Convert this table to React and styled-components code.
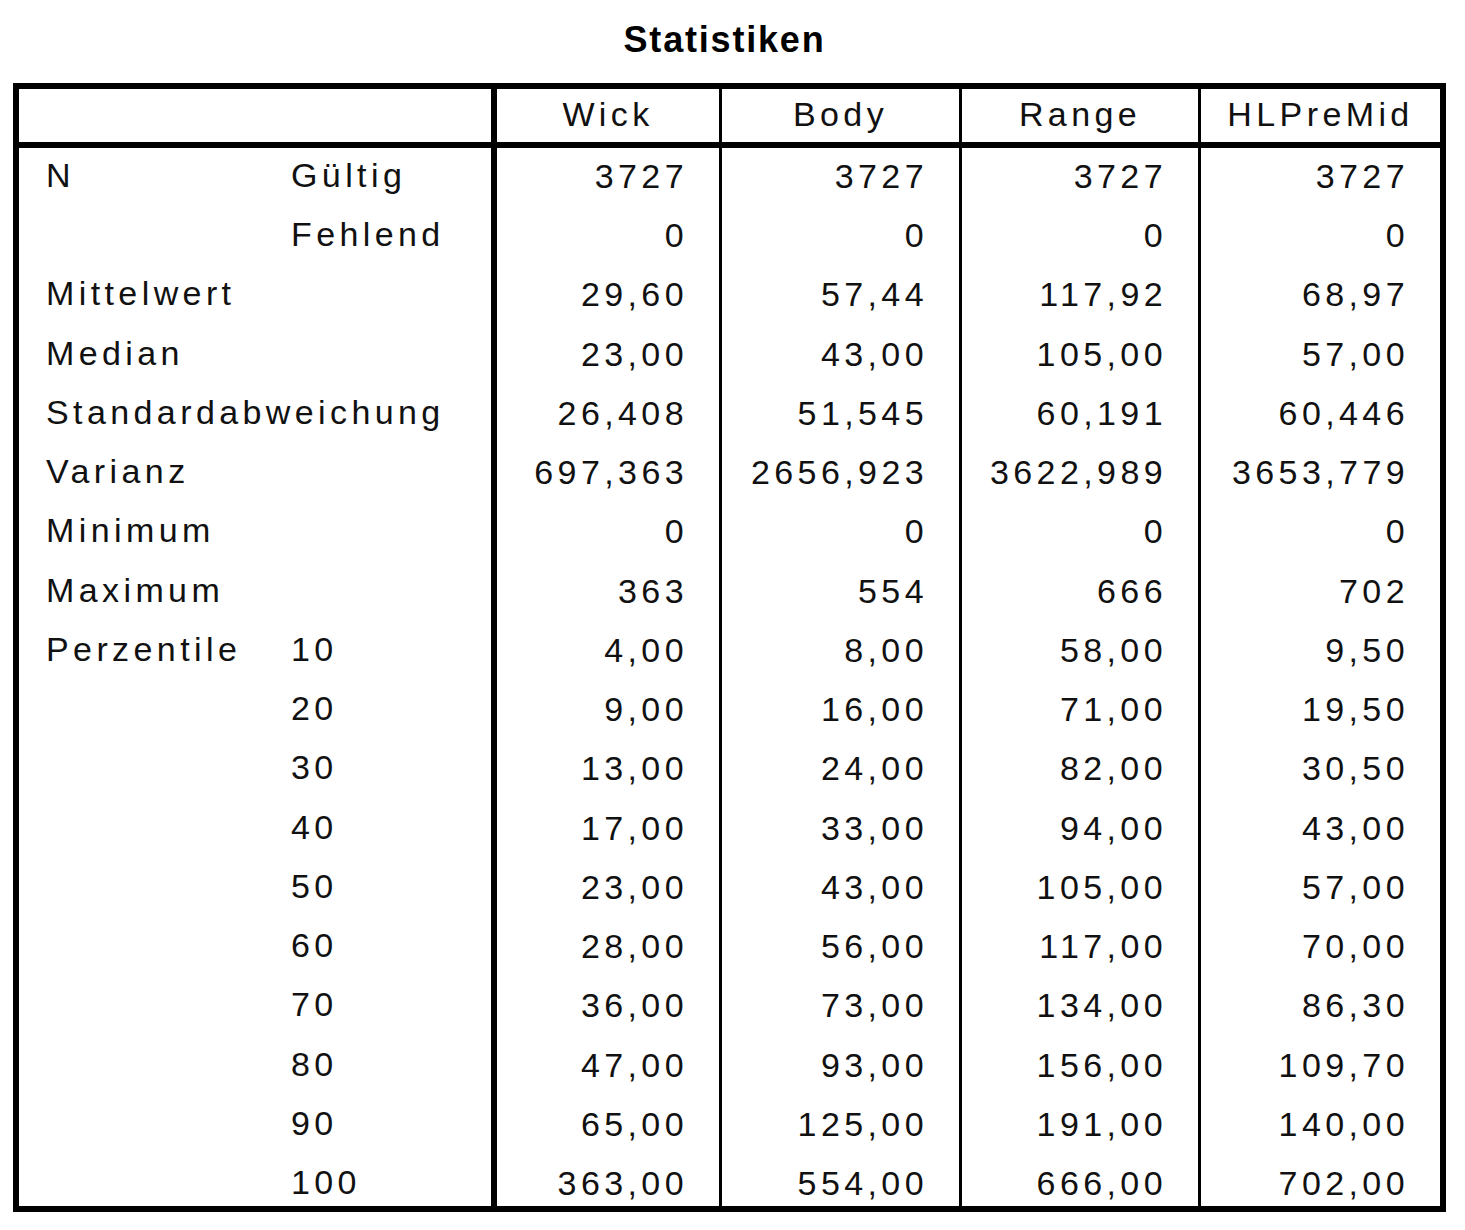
import React from 'react'
import styled, { createGlobalStyle } from 'styled-components'

const GlobalStyle = createGlobalStyle`
  html, body {
    margin: 0;
    padding: 0;
    background: #ffffff;
  }
  body {
    font-family: "Liberation Sans", Arial, sans-serif;
    color: #111;
  }
`

const Page = styled.div`
  padding: 0 0 0 13px;
  width: 1433px;
`

const Title = styled.h1`
  margin: 0;
  height: 83px;
  display: flex;
  align-items: center;
  justify-content: center;
  padding-right: 10px;
  padding-bottom: 4px;
  box-sizing: border-box;
  font-size: 36px;
  font-weight: bold;
  letter-spacing: 1.8px;
  color: #000;
`

const Grid = styled.div`
  display: grid;
  grid-template-columns: 245px 227px 228px 240px 239px 242px;
  grid-template-rows: 59px repeat(18, 58.8px);
  border: 6px solid #000;
  width: 1433px;
  box-sizing: border-box;
`

// $nudge pushes the text of lower rows down a little, like the SPSS output does
const Cell = styled.div`
  box-sizing: border-box;
  display: flex;
  align-items: center;
  justify-content: ${p => (p.$align === 'right' ? 'flex-end' : p.$align === 'center' ? 'center' : 'flex-start')};
  padding-top: ${p => p.$nudge || 0}px;
  padding-right: ${p => (p.$align === 'right' ? '31px' : '0')};
  padding-bottom: ${p => (p.$align === 'right' || p.$align === 'center' ? '2px' : '4px')};
  padding-left: ${p => (p.$align ? '0' : '27px')};
  border-left: ${p => (p.$line === 'thick' ? '6px solid #000' : p.$line === 'thin' ? '3px solid #000' : 'none')};
  border-bottom: ${p => (p.$head ? '6px solid #000' : 'none')};
  grid-column: ${p => p.$span || 'auto'};
  font-size: 34px;
  letter-spacing: 4.4px;
  white-space: nowrap;
`

const columns = ['Wick', 'Body', 'Range', 'HLPreMid']

const rows = [
  ['N', 'Gültig', '3727', '3727', '3727', '3727'],
  ['', 'Fehlend', '0', '0', '0', '0'],
  ['Mittelwert', '', '29,60', '57,44', '117,92', '68,97'],
  ['Median', '', '23,00', '43,00', '105,00', '57,00'],
  ['Standardabweichung', '', '26,408', '51,545', '60,191', '60,446'],
  ['Varianz', '', '697,363', '2656,923', '3622,989', '3653,779'],
  ['Minimum', '', '0', '0', '0', '0'],
  ['Maximum', '', '363', '554', '666', '702'],
  ['Perzentile', '10', '4,00', '8,00', '58,00', '9,50'],
  ['', '20', '9,00', '16,00', '71,00', '19,50'],
  ['', '30', '13,00', '24,00', '82,00', '30,50'],
  ['', '40', '17,00', '33,00', '94,00', '43,00'],
  ['', '50', '23,00', '43,00', '105,00', '57,00'],
  ['', '60', '28,00', '56,00', '117,00', '70,00'],
  ['', '70', '36,00', '73,00', '134,00', '86,30'],
  ['', '80', '47,00', '93,00', '156,00', '109,70'],
  ['', '90', '65,00', '125,00', '191,00', '140,00'],
  ['', '100', '363,00', '554,00', '666,00', '702,00'],
]

const App = () => {
  return (
    <Page>
      <GlobalStyle />
      <Title>Statistiken</Title>
      <Grid>
        <Cell $head $span="span 2" />
        {columns.map((c, i) => (
          <Cell key={c} $head $align="center" $line={i === 0 ? 'thick' : 'thin'}>
            {c}
          </Cell>
        ))}
        {rows.map((r, ri) => {
          const nudge = ri * 0.9
          return (
            <React.Fragment key={ri}>
              <Cell $nudge={nudge}>{r[0]}</Cell>
              <Cell $nudge={nudge}>{r[1]}</Cell>
              {r.slice(2).map((v, i) => (
                <Cell key={i} $nudge={nudge} $align="right" $line={i === 0 ? 'thick' : 'thin'}>
                  {v}
                </Cell>
              ))}
            </React.Fragment>
          )
        })}
      </Grid>
    </Page>
  )
}

export default App
